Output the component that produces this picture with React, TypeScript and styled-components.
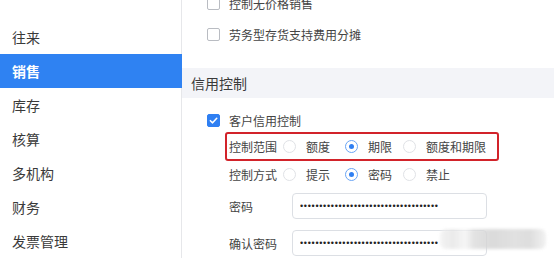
import React from "react";
import styled, { createGlobalStyle } from "styled-components";

const GlobalStyle = createGlobalStyle`
    html, body {
        margin: 0;
        padding: 0;
        background: #fff;
    }
    body {
        font-family: "Liberation Sans", "Noto Sans CJK SC", sans-serif;
        color: #333;
    }
`;

const Page = styled.div`
    position: relative;
    width: 554px;
    height: 276px;
    overflow: hidden;
    background: #fff;
`;

const Window = styled.div`
    display: flex;
    height: 258px;
`;

const Sidebar = styled.ul`
    width: 182px;
    flex-shrink: 0;
    margin: 0;
    padding: 20px 0 0;
    list-style: none;
    border-right: 1px solid #e6e7ea;
    box-sizing: border-box;
`;

const MenuItem = styled.li<{ $active?: boolean }>`
    height: 34px;
    display: flex;
    align-items: center;
    padding-left: 12px;
    font-size: 14px;
    font-family: "Noto Sans CJK SC", sans-serif;
    color: ${(p) => (p.$active ? "#fff" : "#3a3a3a")};
    background: ${(p) => (p.$active ? "#2f82f2" : "transparent")};
    font-weight: ${(p) => (p.$active ? 700 : 400)};
    margin-right: ${(p) => (p.$active ? "-1px" : "0")};
`;

const Content = styled.div`
    flex: 1;
    overflow: hidden;
    font-family: "Noto Sans CJK SC", sans-serif;
    font-size: 12px;
    color: #444;
`;

const TopOptions = styled.div`
    margin-top: -12px;
    padding-left: 25px;
`;

const CheckRow = styled.label<{ $height?: number }>`
    display: flex;
    align-items: center;
    gap: 9px;
    height: ${(p) => p.$height ?? 31}px;
`;

const CheckBox = styled.span<{ $checked?: boolean }>`
    width: 13px;
    height: 13px;
    box-sizing: border-box;
    border-radius: 2px;
    border: 1px solid ${(p) => (p.$checked ? "#2f7ff2" : "#b9bcc2")};
    background: ${(p) => (p.$checked ? "#2f7ff2" : "#fff")};
    display: flex;
    align-items: center;
    justify-content: center;
`;

const SectionHeader = styled.div`
    margin-top: 18px;
    height: 30px;
    display: flex;
    align-items: center;
    padding-left: 9px;
    background: #f3f4f8;
    font-size: 14px;
    color: #3a3a3a;
`;

const Body = styled.div`
    padding: 9px 0 0 25px;
`;

const FieldRow = styled.div<{ $highlight?: boolean; $height?: number }>`
    display: flex;
    align-items: center;
    box-sizing: border-box;
    width: 274px;
    height: ${(p) => p.$height ?? 26}px;
    margin-left: 18px;
    padding-left: 2px;
    border: 2px solid ${(p) => (p.$highlight ? "#d2232a" : "transparent")};
    border-radius: 3px;
`;

const FieldLabel = styled.span<{ $width?: number }>`
    width: ${(p) => p.$width ?? 54}px;
    flex-shrink: 0;
    color: #444;
`;

const RadioOption = styled.span<{ $width?: number }>`
    display: flex;
    align-items: center;
    gap: 10px;
    width: ${(p) => p.$width ?? 62}px;
`;

const Radio = styled.span<{ $checked?: boolean }>`
    width: 13px;
    height: 13px;
    box-sizing: border-box;
    border-radius: 50%;
    border: 1px solid ${(p) => (p.$checked ? "#6aa5f5" : "#e0e2e6")};
    display: flex;
    align-items: center;
    justify-content: center;
    &::after {
        content: "";
        width: 5px;
        height: 5px;
        border-radius: 50%;
        background: ${(p) => (p.$checked ? "#2f7ff2" : "transparent")};
    }
`;

const PasswordRow = styled(FieldRow)<{ $gap?: number }>`
    margin-top: ${(p) => p.$gap ?? 0}px;
    width: 300px;
`;

const PasswordInput = styled.input`
    width: 195px;
    height: 26px;
    box-sizing: border-box;
    border: 1px solid #dcdfe4;
    border-radius: 4px;
    padding: 0 7px;
    font-size: 9px;
    letter-spacing: 0.7px;
    color: #222;
    background: #fff;
    outline: none;
`;

const Watermark = styled.div`
    position: absolute;
    left: 440px;
    top: 229px;
    width: 106px;
    height: 20px;
    border-radius: 6px;
    background: linear-gradient(
        90deg,
        #f1f1f1 0%,
        #e6e6e6 12%,
        #f4f4f4 24%,
        #dcdcdc 32%,
        #d2d2d2 50%,
        #dadada 70%,
        #d6d6d6 85%,
        #efefef 100%
    );
    filter: blur(1.5px);
    opacity: 0.8;
`;

const Check = () => (
    <svg width="9" height="9" viewBox="0 0 10 10">
        <path d="M1.5 5.2 L4 7.6 L8.6 2.6" stroke="#fff" strokeWidth="1.7" fill="none" strokeLinecap="round" strokeLinejoin="round" />
    </svg>
);

const menus = ["往来", "销售", "库存", "核算", "多机构", "财务", "发票管理"];

const App = () => {
    const dots = "0".repeat(36);
    return (
        <Page>
            <GlobalStyle />
            <Window>
                <Sidebar>
                    {menus.map((m) => (
                        <MenuItem key={m} $active={m === "销售"}>{m}</MenuItem>
                    ))}
                </Sidebar>
                <Content>
                    <TopOptions>
                        <CheckRow><CheckBox />控制无价格销售</CheckRow>
                        <CheckRow><CheckBox />劳务型存货支持费用分摊</CheckRow>
                    </TopOptions>
                    <SectionHeader>信用控制</SectionHeader>
                    <Body>
                        <CheckRow $height={26}>
                            <CheckBox $checked><Check /></CheckBox>
                            客户信用控制
                        </CheckRow>
                        <FieldRow $highlight $height={29} style={{ marginTop: -1 }}>
                            <FieldLabel>控制范围</FieldLabel>
                            <RadioOption><Radio />额度</RadioOption>
                            <RadioOption $width={58}><Radio $checked />期限</RadioOption>
                            <RadioOption $width={90}><Radio />额度和期限</RadioOption>
                        </FieldRow>
                        <FieldRow>
                            <FieldLabel>控制方式</FieldLabel>
                            <RadioOption><Radio />提示</RadioOption>
                            <RadioOption $width={58}><Radio $checked />密码</RadioOption>
                            <RadioOption $width={60}><Radio />禁止</RadioOption>
                        </FieldRow>
                        <PasswordRow $gap={6}>
                            <FieldLabel $width={63}>密码</FieldLabel>
                            <PasswordInput type="password" readOnly value={dots} />
                        </PasswordRow>
                        <PasswordRow $gap={11}>
                            <FieldLabel $width={63}>确认密码</FieldLabel>
                            <PasswordInput type="password" readOnly value={dots} />
                        </PasswordRow>
                    </Body>
                </Content>
            </Window>
            <Watermark />
        </Page>
    );
};

export default App;
